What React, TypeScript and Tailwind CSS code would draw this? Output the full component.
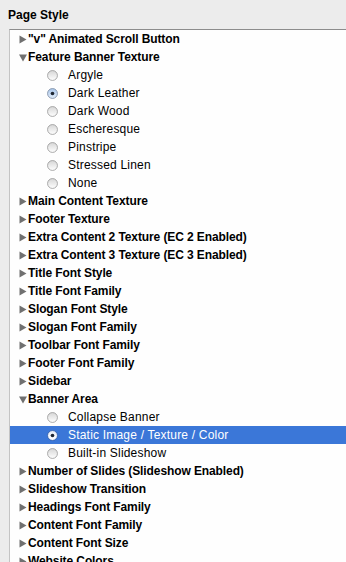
import React from "react";

type Row =
  | { kind: "group"; label: string; open?: boolean }
  | { kind: "radio"; label: string; checked?: boolean; selected?: boolean };

const rows: Row[] = [
  { kind: "group", label: '"v" Animated Scroll Button' },
  { kind: "group", label: "Feature Banner Texture", open: true },
  { kind: "radio", label: "Argyle" },
  { kind: "radio", label: "Dark Leather", checked: true },
  { kind: "radio", label: "Dark Wood" },
  { kind: "radio", label: "Escheresque" },
  { kind: "radio", label: "Pinstripe" },
  { kind: "radio", label: "Stressed Linen" },
  { kind: "radio", label: "None" },
  { kind: "group", label: "Main Content Texture" },
  { kind: "group", label: "Footer Texture" },
  { kind: "group", label: "Extra Content 2 Texture (EC 2 Enabled)" },
  { kind: "group", label: "Extra Content 3 Texture (EC 3 Enabled)" },
  { kind: "group", label: "Title Font Style" },
  { kind: "group", label: "Title Font Family" },
  { kind: "group", label: "Slogan Font Style" },
  { kind: "group", label: "Slogan Font Family" },
  { kind: "group", label: "Toolbar Font Family" },
  { kind: "group", label: "Footer Font Family" },
  { kind: "group", label: "Sidebar" },
  { kind: "group", label: "Banner Area", open: true },
  { kind: "radio", label: "Collapse Banner" },
  { kind: "radio", label: "Static Image / Texture / Color", checked: true, selected: true },
  { kind: "radio", label: "Built-in Slideshow" },
  { kind: "group", label: "Number of Slides (Slideshow Enabled)" },
  { kind: "group", label: "Slideshow Transition" },
  { kind: "group", label: "Headings Font Family" },
  { kind: "group", label: "Content Font Family" },
  { kind: "group", label: "Content Font Size" },
  { kind: "group", label: "Website Colors" },
];

function Triangle({ open }: { open?: boolean }) {
  return (
    <svg width="8" height="9" viewBox="0 0 8 9" className="shrink-0">
      {open ? (
        <polygon points="0,1.5 8,1.5 4,8.5" fill="#707070" />
      ) : (
        <polygon points="0.5,0.5 7.5,4.5 0.5,8.5" fill="#707070" />
      )}
    </svg>
  );
}

function Radio({ checked, selected }: { checked?: boolean; selected?: boolean }) {
  return (
    <svg width="11" height="11" viewBox="0 0 12 12" className="shrink-0">
      <defs>
        <linearGradient id="rg" x1="0" y1="0" x2="0" y2="1">
          <stop offset="0" stopColor="#d6d6d6" />
          <stop offset="1" stopColor="#ffffff" />
        </linearGradient>
        <linearGradient id="rb" x1="0" y1="0" x2="0" y2="1">
          <stop offset="0" stopColor="#a9c6ea" />
          <stop offset="1" stopColor="#e3eefb" />
        </linearGradient>
        <linearGradient id="rw" x1="0" y1="0" x2="0" y2="1">
          <stop offset="0" stopColor="#e8eef8" />
          <stop offset="1" stopColor="#ffffff" />
        </linearGradient>
      </defs>
      <circle
        cx="6"
        cy="6"
        r="5.4"
        fill={selected ? "url(#rw)" : checked ? "url(#rb)" : "url(#rg)"}
        stroke={selected ? "#2d5aa8" : checked ? "#7b8ba3" : "#9a9a9a"}
        strokeWidth="0.9"
      />
      {checked && <circle cx="6" cy="6" r="2" fill="#1e2633" />}
    </svg>
  );
}

export default function App() {
  return (
    <div
      className="w-[346px] h-[562px] overflow-hidden bg-[#ececec] flex flex-col"
      style={{ fontFamily: '"Liberation Sans", Arial, sans-serif' }}
    >
      <div className="h-[29px] pl-[8px] pt-[7px] text-[12px] font-bold text-black leading-[16px]">
        Page Style
      </div>
      <div className="ml-[9px] flex-1 bg-[#fefefe] border-t border-l border-t-[#8c8c8c] border-l-[#c4c4c4] overflow-hidden">
        {rows.map((r, i) =>
          r.kind === "group" ? (
            <div key={i} className="h-[18px] flex items-center pl-[9px] gap-[1px]">
              <Triangle open={r.open} />
              <span className="text-[12px] font-bold text-black leading-[18px] whitespace-nowrap tracking-[-0.1px]">
                {r.label}
              </span>
            </div>
          ) : (
            <div
              key={i}
              className={
                "h-[18px] flex items-center pl-[37px] gap-[10px] " +
                (r.selected ? "bg-[#3b77d8] text-white" : "text-black")
              }
            >
              <Radio checked={r.checked} selected={r.selected} />
              <span className="text-[12px] leading-[18px] whitespace-nowrap tracking-[0.2px]">{r.label}</span>
            </div>
          )
        )}
      </div>
    </div>
  );
}
